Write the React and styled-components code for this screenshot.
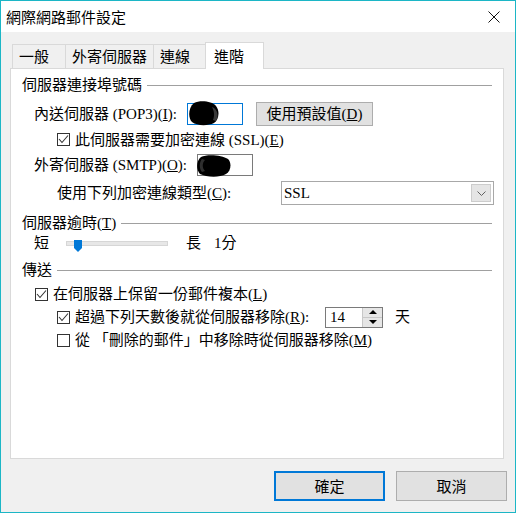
import React from "react";
import styled, { createGlobalStyle } from "styled-components";

const GlobalStyle = createGlobalStyle`
  html, body {
    margin: 0;
    padding: 0;
    background: #ffffff;
  }
  body {
    font-family: "Noto Sans CJK TC", sans-serif;
    color: #000;
  }
`;

const MIXED = `"Liberation Serif", "Noto Sans CJK TC", serif`;

const Window = styled.div`
  width: 516px;
  height: 513px;
  box-sizing: border-box;
  border: 1px solid #1cb6c6;
  background: #f0f0f0;
  display: flex;
  flex-direction: column;
`;

const TitleBar = styled.div`
  height: 31px;
  flex-shrink: 0;
  background: #ffffff;
  display: flex;
  align-items: center;
  justify-content: space-between;
  padding: 0 15px 0 5px;
  font-size: 15px;
  line-height: 20px;
`;

const CloseIcon = () => (
  <svg width="12" height="12" viewBox="0 0 12 12">
    <path d="M0.5 0.5 L11.5 11.5 M11.5 0.5 L0.5 11.5" stroke="#111" strokeWidth="1" />
  </svg>
);

const TabStrip = styled.div`
  margin-top: 10px;
  padding-left: 11px;
  height: 26px;
  display: flex;
  align-items: flex-end;
`;

const Tab = styled.div`
  box-sizing: border-box;
  width: ${(p) => p.$w}px;
  height: ${(p) => (p.$active ? 27 : 24)}px;
  margin-left: ${(p) => (p.$first ? 0 : -1)}px;
  margin-bottom: ${(p) => (p.$active ? -1 : 0)}px;
  padding-left: ${(p) => (p.$active ? 8 : 6)}px;
  border: 1px solid #d9d9d9;
  border-bottom: none;
  background: ${(p) => (p.$active ? "#ffffff" : "#f0f0f0")};
  position: relative;
  z-index: ${(p) => (p.$active ? 2 : 1)};
  font-size: 15px;
  line-height: ${(p) => (p.$active ? 26 : 22)}px;
  white-space: nowrap;
`;

const Panel = styled.div`
  box-sizing: border-box;
  margin-left: 9px;
  width: 494px;
  height: 391px;
  border: 1px solid #d9d9d9;
  background: #ffffff;
  padding: 6px 11px 0 11px;
  display: flex;
  flex-direction: column;
  font-family: ${MIXED};
  font-size: 15px;
`;

const GroupHeader = styled.div`
  height: 20px;
  line-height: 20px;
  margin-top: ${(p) => p.$mt || 0}px;
  display: flex;
  align-items: center;
  white-space: nowrap;
  &::after {
    content: "";
    flex: 1;
    height: 1px;
    margin-left: 5px;
    background: #a0a0a0;
  }
`;

const Row = styled.div`
  height: ${(p) => p.$h}px;
  margin-top: ${(p) => p.$mt || 0}px;
  padding-left: ${(p) => p.$indent || 0}px;
  display: flex;
  align-items: center;
  line-height: 20px;
  white-space: nowrap;
  flex-shrink: 0;
`;

const Label = styled.span`
  display: inline-block;
  width: ${(p) => (p.$w ? `${p.$w}px` : "auto")};
  flex-shrink: 0;
`;

const TextBox = styled.div`
  box-sizing: border-box;
  position: relative;
  width: ${(p) => p.$w}px;
  height: ${(p) => p.$h}px;
  border: 1px solid ${(p) => (p.$focus ? "#0078d7" : "#7a7a7a")};
  background: #ffffff;
  flex-shrink: 0;
`;

const Blob = styled.svg`
  position: absolute;
  left: ${(p) => p.$x}px;
  top: ${(p) => p.$y}px;
`;

const PushButton = styled.button`
  box-sizing: border-box;
  width: ${(p) => p.$w}px;
  height: ${(p) => p.$h}px;
  margin-left: ${(p) => p.$ml || 0}px;
  background: #e1e1e1;
  border: ${(p) => (p.$primary ? "2px solid #0078d7" : "1px solid #adadad")};
  font-family: ${MIXED};
  font-size: 15px;
  line-height: 20px;
  color: #000;
  padding: 0;
  flex-shrink: 0;
`;

const CheckBoxBox = styled.span`
  box-sizing: border-box;
  width: 13px;
  height: 13px;
  border: 1px solid #333333;
  background: #ffffff;
  margin-right: 5px;
  display: inline-flex;
  flex-shrink: 0;
`;

const CheckBox = ({ checked }) => (
  <CheckBoxBox>
    {checked && (
      <svg width="11" height="11" viewBox="0 0 11 11">
        <polyline points="1,5 4,8.5 10,1.5" fill="none" stroke="#333" strokeWidth="1.1" />
      </svg>
    )}
  </CheckBoxBox>
);

const Select = styled.div`
  box-sizing: border-box;
  width: 213px;
  height: 24px;
  border: 1px solid #a8a8a8;
  background: #ffffff;
  display: flex;
  align-items: center;
  justify-content: space-between;
  padding: 0 2px 0 2px;
  flex-shrink: 0;
`;

const DropButton = styled.span`
  box-sizing: border-box;
  width: 20px;
  height: 18px;
  background: #e5e5e5;
  border: 1px solid #cccccc;
  display: flex;
  align-items: center;
  justify-content: center;
`;

const Track = styled.div`
  position: relative;
  box-sizing: border-box;
  width: 102px;
  height: 5px;
  margin-left: 17px;
  background: #e7e7e7;
  border: 1px solid #d6d6d6;
  flex-shrink: 0;
`;

const Thumb = styled.svg`
  position: absolute;
  left: 7px;
  top: -2px;
`;

const SpinBox = styled.div`
  box-sizing: border-box;
  width: 58px;
  height: 21px;
  border: 1px solid #7a7a7a;
  background: #ffffff;
  display: flex;
  flex-shrink: 0;
`;

const SpinValue = styled.span`
  flex: 1;
  padding-left: 4px;
  line-height: 19px;
`;

const SpinButtons = styled.div`
  width: 19px;
  display: flex;
  flex-direction: column;
  border-left: 1px solid #c8c8c8;
`;

const SpinHalf = styled.div`
  flex: 1;
  background: #e6e6e6;
  display: flex;
  align-items: center;
  justify-content: center;
  border-top: ${(p) => (p.$down ? "1px solid #c8c8c8" : "none")};
  &::before {
    content: "";
    width: 0;
    height: 0;
    border-left: 4px solid transparent;
    border-right: 4px solid transparent;
    ${(p) => (p.$down ? "border-top: 4px solid #000;" : "border-bottom: 4px solid #000;")}
  }
`;

const Footer = styled.div`
  margin-top: 12px;
  padding-right: 8px;
  display: flex;
  justify-content: flex-end;
  gap: 11px;
`;

const FooterButton = styled(PushButton)`
  font-family: "Noto Sans CJK TC", sans-serif;
`;

const Inline = styled.span`
  margin-left: ${(p) => p.$ml || 0}px;
`;

export default function App() {
  return (
    <>
      <GlobalStyle />
      <Window>
        <TitleBar>
          <span>網際網路郵件設定</span>
          <CloseIcon />
        </TitleBar>

        <TabStrip>
          <Tab $w={54} $first>一般</Tab>
          <Tab $w={89}>外寄伺服器</Tab>
          <Tab $w={53}>連線</Tab>
          <Tab $w={59} $active>進階</Tab>
        </TabStrip>

        <Panel>
          <GroupHeader>伺服器連接埠號碼</GroupHeader>

          <Row $h={24} $mt={7} $indent={12}>
            <Label $w={153}>內送伺服器 (POP3)(<u>I</u>):</Label>
            <TextBox $w={56} $h={22} $focus>
              <Blob $x={0} $y={-3} width="32" height="25" viewBox="0 0 32 25">
                <path d="M6 2 C12 -1 24 0 28 5 C32 10 31 19 26 22 C20 25 9 25 4 21 C0 17 0 7 6 2 Z" fill="#000" />
                <path d="M24 6 C30 8 31 16 28 20 L25 19 C27 14 26 10 24 6 Z" fill="#3a3a3a" />
              </Blob>
            </TextBox>
            <PushButton $w={117} $h={24} $ml={13}>使用預設值(<u>D</u>)</PushButton>
          </Row>

          <Row $h={21} $mt={3} $indent={35}>
            <CheckBox checked />
            <span>此伺服器需要加密連線 (SSL)(<u>E</u>)</span>
          </Row>

          <Row $h={22} $mt={4} $indent={12}>
            <Label $w={163}>外寄伺服器 (SMTP)(<u>O</u>):</Label>
            <TextBox $w={56} $h={22}>
              <Blob $x={-2} $y={0} width="36" height="22" viewBox="0 0 36 22">
                <path d="M5 2 C11 -1 26 0 32 4 C36 8 35 16 30 19 C23 23 10 22 4 19 C0 15 0 6 5 2 Z" fill="#000" />
                <path d="M6 4 C3 7 3 14 6 17 L9 16 C6 13 6 8 9 5 Z" fill="#2e2e2e" />
              </Blob>
            </TextBox>
          </Row>

          <Row $h={24} $mt={5} $indent={35}>
            <Label $w={224}>使用下列加密連線類型(<u>C</u>):</Label>
            <Select>
              <span>SSL</span>
              <DropButton>
                <svg width="9" height="5" viewBox="0 0 9 5">
                  <polyline points="0.5,0.5 4.5,4.5 8.5,0.5" fill="none" stroke="#606060" strokeWidth="1" />
                </svg>
              </DropButton>
            </Select>
          </Row>

          <GroupHeader $mt={8}>伺服器逾時(<u>T</u>)</GroupHeader>

          <Row $h={20} $indent={12}>
            <span>短</span>
            <Track>
              <Thumb width="8" height="12" viewBox="0 0 8 12">
                <path d="M0 0 H8 V8 L4 12 L0 8 Z" fill="#0078d7" />
              </Thumb>
            </Track>
            <Inline $ml={18}>長</Inline>
            <Inline $ml={13}>1分</Inline>
          </Row>

          <GroupHeader $mt={7}>傳送</GroupHeader>

          <Row $h={20} $mt={4} $indent={13}>
            <CheckBox checked />
            <span>在伺服器上保留一份郵件複本(<u>L</u>)</span>
          </Row>

          <Row $h={22} $mt={2} $indent={35}>
            <CheckBox checked />
            <Label $w={250}>超過下列天數後就從伺服器移除(<u>R</u>):</Label>
            <SpinBox>
              <SpinValue>14</SpinValue>
              <SpinButtons>
                <SpinHalf />
                <SpinHalf $down />
              </SpinButtons>
            </SpinBox>
            <Inline $ml={12}>天</Inline>
          </Row>

          <Row $h={20} $mt={2} $indent={35}>
            <CheckBox />
            <span>從 「刪除的郵件」中移除時從伺服器移除(<u>M</u>)</span>
          </Row>
        </Panel>

        <Footer>
          <FooterButton $w={111} $h={30} $primary>確定</FooterButton>
          <FooterButton $w={111} $h={30}>取消</FooterButton>
        </Footer>
      </Window>
    </>
  );
}
